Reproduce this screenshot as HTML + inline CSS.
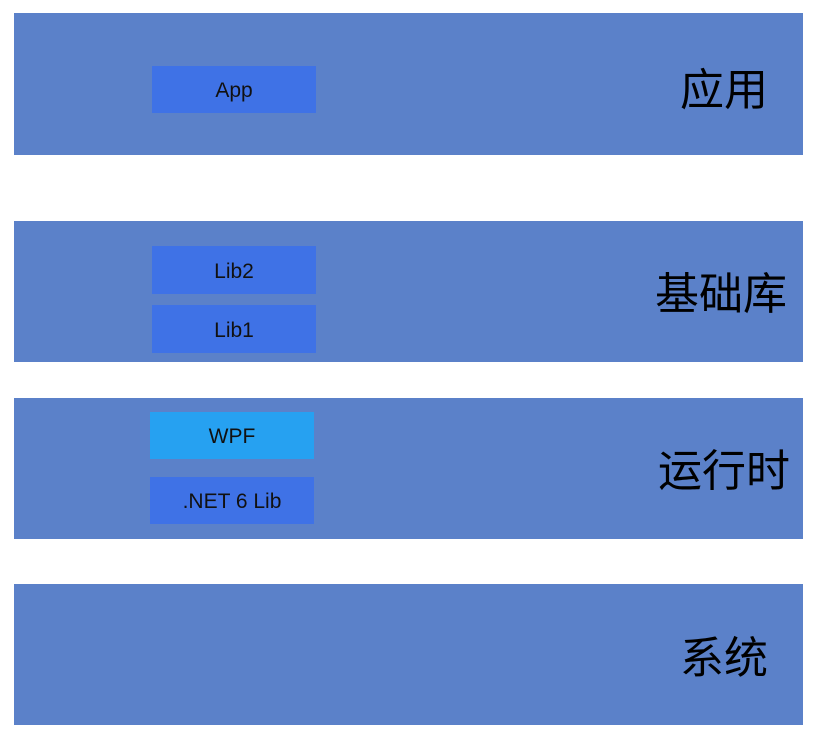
<!DOCTYPE html>
<html><head><meta charset="utf-8"><style>
body{margin:0;width:817px;height:739px;background:#fff;position:relative;overflow:hidden;font-family:"Liberation Sans","Noto Sans CJK SC",sans-serif}
.b{position:absolute;left:14px;width:789px;background:#5b81c9}
.x{position:absolute;width:164px;height:47px;background:#3f72e6;color:#111;font-size:21px;display:flex;align-items:center;justify-content:center;padding-top:3px;box-sizing:border-box}
.t{position:absolute;font-size:44px;color:#000;line-height:1;transform:translate(-50%,-50%);white-space:nowrap;font-family:"Noto Sans CJK SC",sans-serif}
</style></head><body>
<div class="b" style="top:13px;height:142px"></div>
<div class="b" style="top:221px;height:141px"></div>
<div class="b" style="top:398px;height:141px"></div>
<div class="b" style="top:584px;height:141px"></div>
<div class="x" style="left:152px;top:66px">App</div>
<div class="x" style="left:152px;top:246px;height:48px">Lib2</div>
<div class="x" style="left:152px;top:305px;height:48px">Lib1</div>
<div class="x" style="left:150px;top:412px;background:#26a1f1">WPF</div>
<div class="x" style="left:150px;top:477px">.NET 6 Lib</div>
<div class="t" style="left:724px;top:86px">应用</div>
<div class="t" style="left:721px;top:290px">基础库</div>
<div class="t" style="left:724px;top:467px">运行时</div>
<div class="t" style="left:724px;top:654px">系统</div>
</body></html>
